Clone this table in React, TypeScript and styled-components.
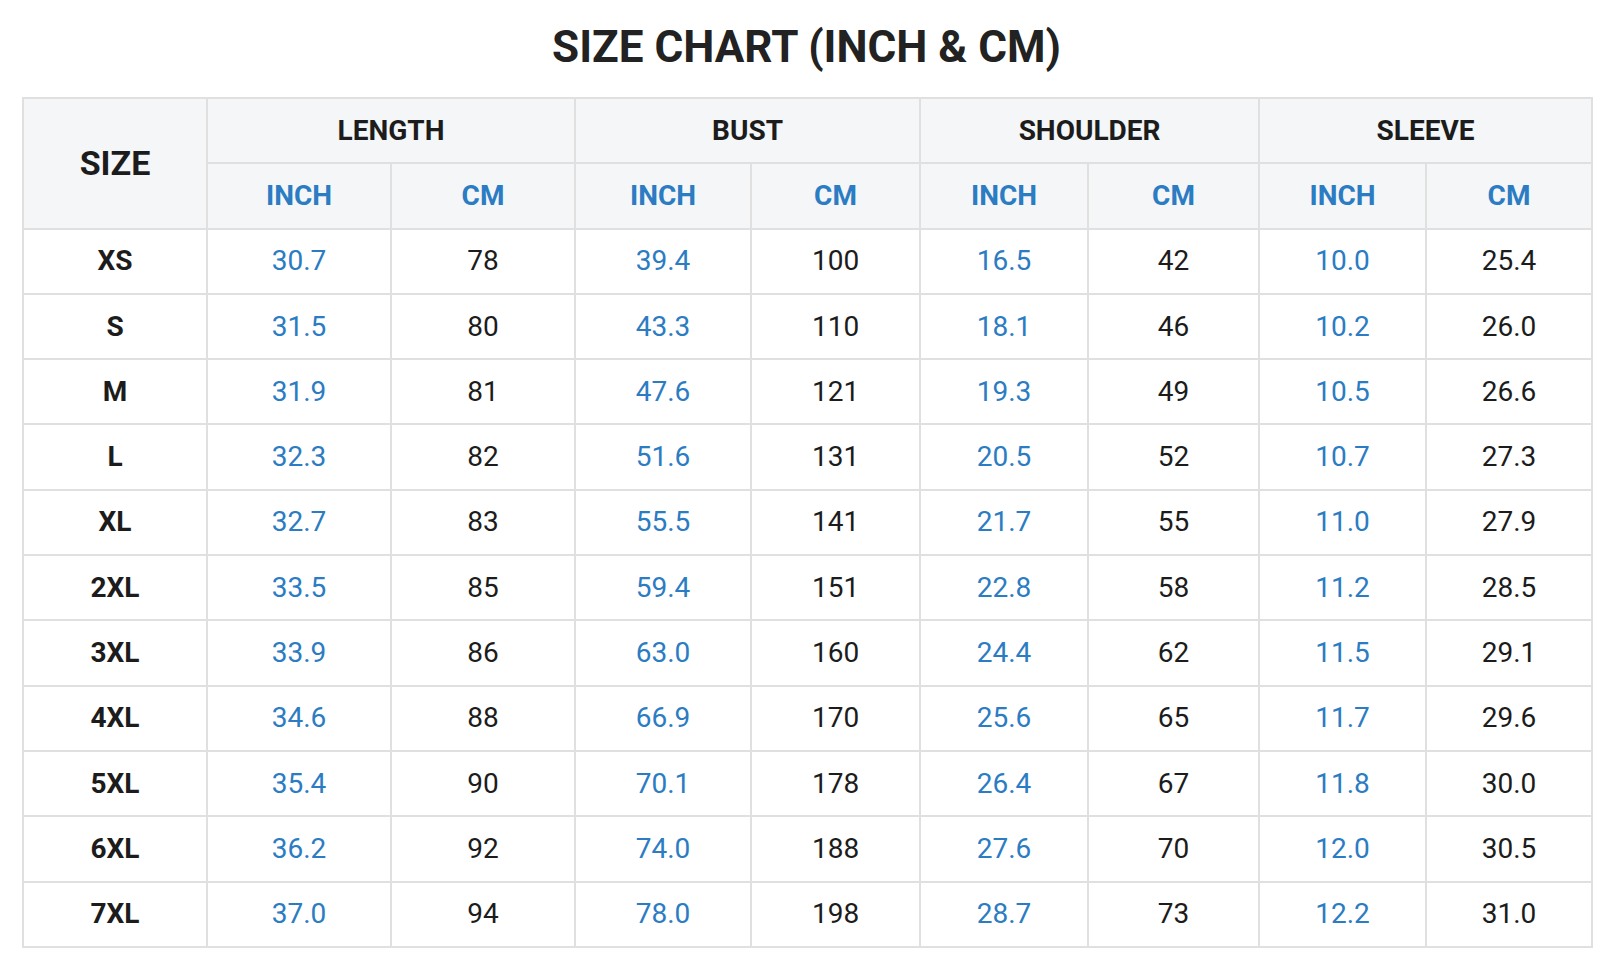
import React from "react";
import styled, { createGlobalStyle } from "styled-components";

const GlobalStyle = createGlobalStyle`
  html, body {
    margin: 0;
    padding: 0;
    background: #ffffff;
  }
  body {
    font-family: Roboto, "Liberation Sans", Arial, sans-serif;
    color: #222222;
  }
`;

const Page = styled.div`
  padding: 22px 26px 0 22px;
  box-sizing: border-box;
  width: 1617px;
`;

const Title = styled.h1`
  margin: 0 0 25px;
  height: 50px;
  line-height: 50px;
  text-align: center;
  font-size: 44px;
  font-weight: 700;
  color: #222222;
  width: 1569px;
`;

const Table = styled.table`
  border-collapse: collapse;
  table-layout: fixed;
  width: 1569px;
`;

const Row = styled.tr`
  height: 65.3px;
`;

const Cell = styled.td<{ $head?: boolean; $blue?: boolean; $bold?: boolean; $big?: boolean }>`
  border: 2px solid #e0e0e0;
  padding: 0;
  text-align: center;
  vertical-align: middle;
  background: ${(p) => (p.$head ? "#f4f6f8" : "#ffffff")};
  color: ${(p) => (p.$blue ? "#2b7cc2" : "#1c1c1c")};
  font-weight: ${(p) => (p.$bold ? 700 : 400)};
  font-size: ${(p) => (p.$big ? "34px" : "28px")};
  line-height: 1;
`;

const widths = [184, 184, 184, 176, 169, 168, 171, 167, 166];

const groups = ["LENGTH", "BUST", "SHOULDER", "SLEEVE"];

const rows: string[][] = [
  ["XS", "30.7", "78", "39.4", "100", "16.5", "42", "10.0", "25.4"],
  ["S", "31.5", "80", "43.3", "110", "18.1", "46", "10.2", "26.0"],
  ["M", "31.9", "81", "47.6", "121", "19.3", "49", "10.5", "26.6"],
  ["L", "32.3", "82", "51.6", "131", "20.5", "52", "10.7", "27.3"],
  ["XL", "32.7", "83", "55.5", "141", "21.7", "55", "11.0", "27.9"],
  ["2XL", "33.5", "85", "59.4", "151", "22.8", "58", "11.2", "28.5"],
  ["3XL", "33.9", "86", "63.0", "160", "24.4", "62", "11.5", "29.1"],
  ["4XL", "34.6", "88", "66.9", "170", "25.6", "65", "11.7", "29.6"],
  ["5XL", "35.4", "90", "70.1", "178", "26.4", "67", "11.8", "30.0"],
  ["6XL", "36.2", "92", "74.0", "188", "27.6", "70", "12.0", "30.5"],
  ["7XL", "37.0", "94", "78.0", "198", "28.7", "73", "12.2", "31.0"],
];

export default function App() {
  return (
    <Page>
      <GlobalStyle />
      <Title>SIZE CHART (INCH &amp; CM)</Title>
      <Table>
        <colgroup>
          {widths.map((w, i) => (
            <col key={i} style={{ width: w }} />
          ))}
        </colgroup>
        <thead>
          <Row>
            <Cell as="th" rowSpan={2} $head $bold $big>
              SIZE
            </Cell>
            {groups.map((g) => (
              <Cell as="th" key={g} colSpan={2} $head $bold>
                {g}
              </Cell>
            ))}
          </Row>
          <Row>
            {groups.map((g) => (
              <React.Fragment key={g}>
                <Cell as="th" $head $bold $blue>
                  INCH
                </Cell>
                <Cell as="th" $head $bold $blue>
                  CM
                </Cell>
              </React.Fragment>
            ))}
          </Row>
        </thead>
        <tbody>
          {rows.map((r) => (
            <Row key={r[0]}>
              {r.map((v, i) => (
                <Cell key={i} $bold={i === 0} $blue={i > 0 && i % 2 === 1}>
                  {v}
                </Cell>
              ))}
            </Row>
          ))}
        </tbody>
      </Table>
    </Page>
  );
}
